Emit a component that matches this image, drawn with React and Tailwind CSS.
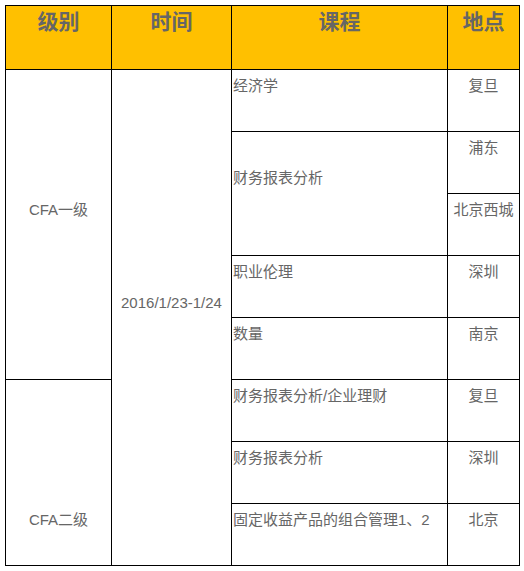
import React from "react";

const font = { fontFamily: '"Liberation Sans", "Noto Sans CJK SC", sans-serif' };

const Head = ({ children }) => (
  <div className="border-r border-b border-black bg-[#FFC000] flex justify-center pt-[2px] text-[21px] leading-[28px] font-bold text-[#666666]">
    {children}
  </div>
);

const Cell = ({ children, className = "" }) => (
  <div className={`border-r border-b border-black text-[15px] leading-[20px] text-[#666666] ${className}`}>
    {children}
  </div>
);

const App = () => {
  return (
    <div className="bg-white w-[524px] h-[571px] pt-[5px] pl-[5px]" style={font}>
      <div className="grid grid-cols-[106px_120px_216px_72px] grid-rows-[64px_repeat(8,62px)] w-fit border-l border-t border-black">
        {/* Header */}
        <Head>级别</Head>
        <Head>时间</Head>
        <Head>课程</Head>
        <Head>地点</Head>

        {/* Body */}
        <Cell className="row-span-5 text-center pt-[130px]">CFA一级</Cell>
        <Cell className="row-span-8 text-center pt-[223px] text-[14.5px]">2016/1/23-1/24</Cell>
        <Cell className="pt-[6px] pl-[1px]">经济学</Cell>
        <Cell className="pt-[6px] text-center">复旦</Cell>

        <Cell className="row-span-2 pt-[36px] pl-[1px]">财务报表分析</Cell>
        <Cell className="pt-[6px] text-center">浦东</Cell>
        <Cell className="pt-[6px] text-center">北京西城</Cell>

        <Cell className="pt-[6px] pl-[1px]">职业伦理</Cell>
        <Cell className="pt-[6px] text-center">深圳</Cell>

        <Cell className="pt-[6px] pl-[1px]">数量</Cell>
        <Cell className="pt-[6px] text-center">南京</Cell>

        <Cell className="row-span-3 text-center pt-[130px]">CFA二级</Cell>
        <Cell className="pt-[6px] pl-[1px]">财务报表分析/企业理财</Cell>
        <Cell className="pt-[6px] text-center">复旦</Cell>

        <Cell className="pt-[6px] pl-[1px]">财务报表分析</Cell>
        <Cell className="pt-[6px] text-center">深圳</Cell>

        <Cell className="pt-[6px] pl-[1px]">固定收益产品的组合管理1、2</Cell>
        <Cell className="pt-[6px] text-center">北京</Cell>
      </div>
    </div>
  );
};

export default App;
